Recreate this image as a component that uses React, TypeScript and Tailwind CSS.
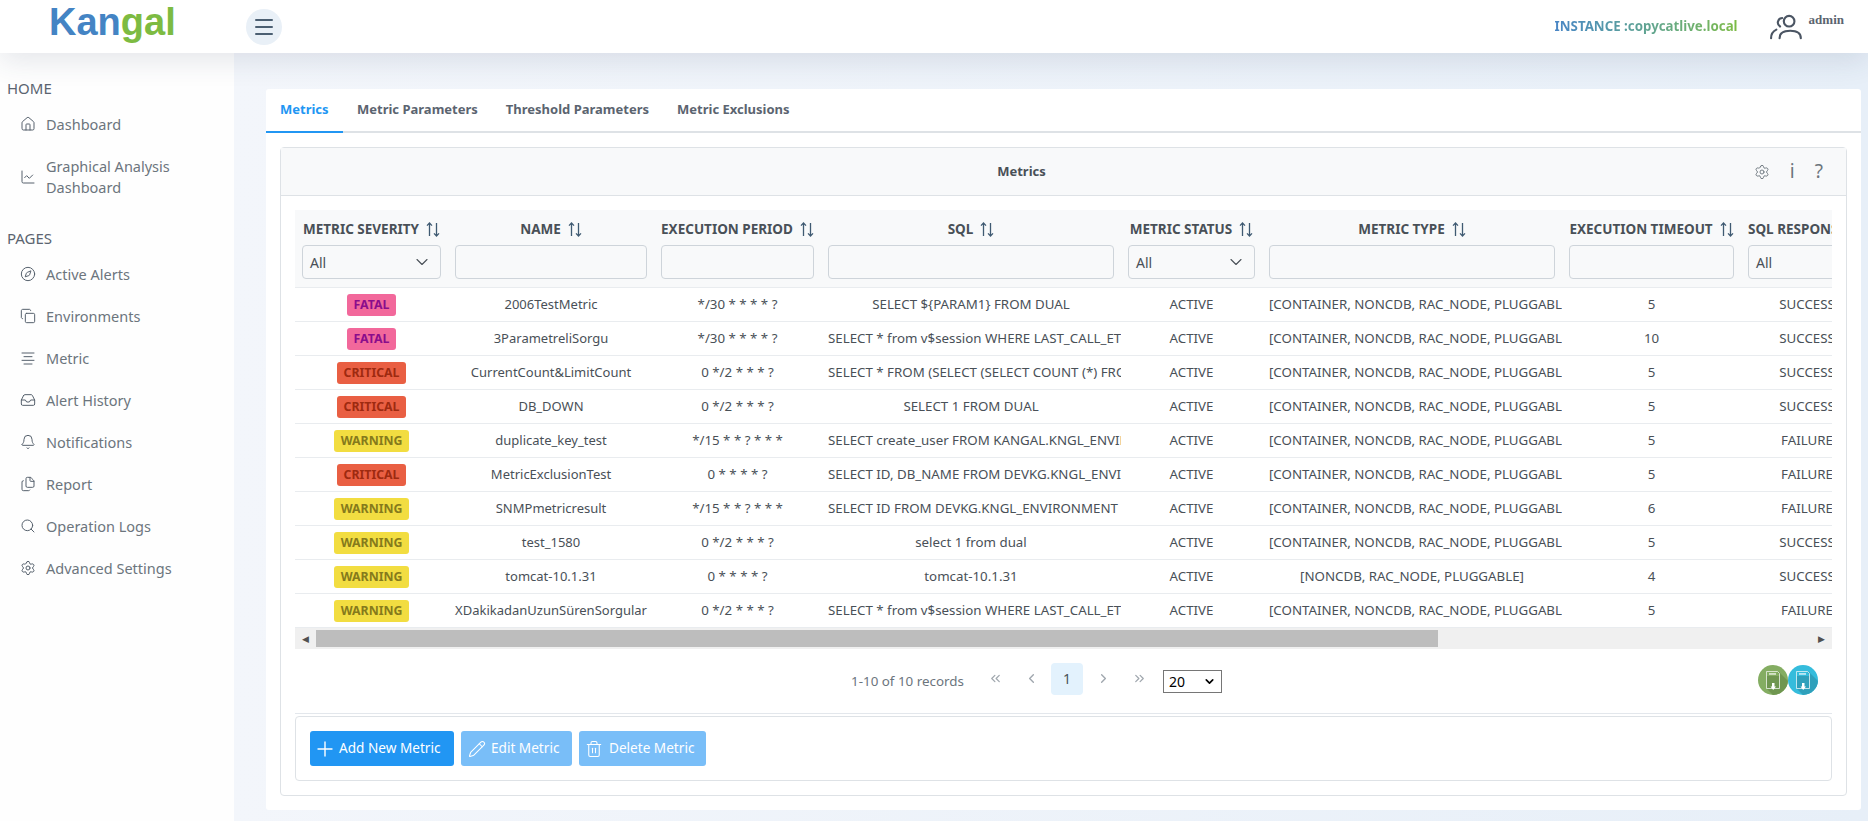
import {
  Bell,
  ChartLine,
  ChevronDown,
  ChevronLeft,
  ChevronRight,
  ChevronsLeft,
  ChevronsRight,
  Compass,
  Copy,
  Files,
  Home,
  Inbox,
  Menu,
  Pencil,
  Plus,
  Search,
  Settings,
  Trash2,
} from "lucide-react";
import React from "react";

type Severity = "FATAL" | "CRITICAL" | "WARNING";

const ALL_TYPES = "[CONTAINER, NONCDB, RAC_NODE, PLUGGABLE]";

const rows: {
  severity: Severity;
  name: string;
  period: string;
  sql: string;
  type: string;
  timeout: number;
  result: string;
}[] = [
  { severity: "FATAL", name: "2006TestMetric", period: "*/30 * * * * ?", sql: "SELECT ${PARAM1} FROM DUAL", type: ALL_TYPES, timeout: 5, result: "SUCCESS" },
  { severity: "FATAL", name: "3ParametreliSorgu", period: "*/30 * * * * ?", sql: "SELECT * from v$session WHERE LAST_CALL_ET > 100", type: ALL_TYPES, timeout: 10, result: "SUCCESS" },
  { severity: "CRITICAL", name: "CurrentCount&LimitCount", period: "0 */2 * * * ?", sql: "SELECT * FROM (SELECT (SELECT COUNT (*) FROM V$SESSION)", type: ALL_TYPES, timeout: 5, result: "SUCCESS" },
  { severity: "CRITICAL", name: "DB_DOWN", period: "0 */2 * * * ?", sql: "SELECT 1 FROM DUAL", type: ALL_TYPES, timeout: 5, result: "SUCCESS" },
  { severity: "WARNING", name: "duplicate_key_test", period: "*/15 * * ? * * *", sql: "SELECT create_user FROM KANGAL.KNGL_ENVIRONMENT", type: ALL_TYPES, timeout: 5, result: "FAILURE" },
  { severity: "CRITICAL", name: "MetricExclusionTest", period: "0 * * * * ?", sql: "SELECT ID, DB_NAME FROM DEVKG.KNGL_ENVIRONMENT", type: ALL_TYPES, timeout: 5, result: "FAILURE" },
  { severity: "WARNING", name: "SNMPmetricresult", period: "*/15 * * ? * * *", sql: "SELECT ID FROM DEVKG.KNGL_ENVIRONMENT", type: ALL_TYPES, timeout: 6, result: "FAILURE" },
  { severity: "WARNING", name: "test_1580", period: "0 */2 * * * ?", sql: "select 1 from dual", type: ALL_TYPES, timeout: 5, result: "SUCCESS" },
  { severity: "WARNING", name: "tomcat-10.1.31", period: "0 * * * * ?", sql: "tomcat-10.1.31", type: "[NONCDB, RAC_NODE, PLUGGABLE]", timeout: 4, result: "SUCCESS" },
  { severity: "WARNING", name: "XDakikadanUzunSürenSorgular", period: "0 */2 * * * ?", sql: "SELECT * from v$session WHERE LAST_CALL_ET > 100", type: ALL_TYPES, timeout: 5, result: "FAILURE" },
];

const severityClass: Record<Severity, string> = {
  FATAL: "bg-[#f2689b] text-[#8a0d8c]",
  CRITICAL: "bg-[#e95f43] text-[#9e2a10]",
  WARNING: "bg-[#f2dd41] text-[#857a1c]",
};

const columns: { title: string; filter: "select" | "input"; width: string; align: string }[] = [
  { title: "METRIC SEVERITY", filter: "select", width: "w-[153px]", align: "justify-center" },
  { title: "NAME", filter: "input", width: "w-[206px]", align: "justify-center" },
  { title: "EXECUTION PERIOD", filter: "input", width: "w-[167px]", align: "justify-center" },
  { title: "SQL", filter: "input", width: "w-[300px]", align: "justify-center" },
  { title: "METRIC STATUS", filter: "select", width: "w-[141px]", align: "justify-center" },
  { title: "METRIC TYPE", filter: "input", width: "w-[300px]", align: "justify-center" },
  { title: "EXECUTION TIMEOUT", filter: "input", width: "w-[179px]", align: "justify-center" },
  { title: "SQL RESPONSE", filter: "select", width: "w-[132px]", align: "justify-start" },
];

function SortIcon() {
  return (
    <svg width="14" height="15" viewBox="0 0 14 15" fill="none" stroke="#3f5a72" strokeWidth="1.3" className="shrink-0">
      <path d="M3.500 14V1M1 3.600 3.500 1 6 3.600" />
      <path d="M10.500 1v13M8 11.400l2.500 2.600 2.500-2.600" />
    </svg>
  );
}

function AlignLines({ size, strokeWidth, className }: { size?: number; strokeWidth?: number; className?: string }) {
  return (
    <svg width={size} height={size} viewBox="0 0 24 24" fill="none" stroke="currentColor" strokeWidth={strokeWidth} strokeLinecap="round" className={className}>
      <path d="M3 4.500h18M6 10h12M3 15.500h18M6 21h12" />
    </svg>
  );
}

function NavItem({ icon: Icon, children }: { icon: React.ComponentType<any>; children: React.ReactNode }) {
  return (
    <div className="flex items-center gap-[10px] pl-[20px] py-[10.5px] text-[14.500px] leading-[21px] text-[#6c757d]">
      <Icon size={16} strokeWidth={1.5} className="shrink-0 text-[#56616d]" />
      <span className="w-[160px]">{children}</span>
    </div>
  );
}

function ExportIcon({ color, shade, id }: { color: string; shade: string; id: string }) {
  return (
    <svg width="30" height="30" viewBox="0 0 30 30">
      <defs>
        <clipPath id={id}>
          <circle cx="15" cy="15" r="15" />
        </clipPath>
      </defs>
      <circle cx="15" cy="15" r="15" fill={color} />
      <path d="M9 24 21 7l12 12v12H16z" fill={shade} clipPath={`url(#${id})`} />
      <path d="M8.500 6.500h11l2 2v15h-13z" fill={shade} stroke="#fff" strokeOpacity="0.7" />
      <path d="M9 7h10.300l1.700 1.700V11H9z" fill={color} />
      <rect x="11" y="8.200" width="7" height="1.500" fill="#fff" fillOpacity="0.8" />
      <path d="M14 18h2.500v3.500h1.500L15.200 25l-2.700-3.500H14z" fill="#fff" />
    </svg>
  );
}

const cell = "overflow-hidden whitespace-nowrap px-[7px] pt-[1px] text-center";

export default function App() {
  return (
    <div className="flex h-screen flex-col overflow-hidden font-['Noto_Sans',sans-serif]">
      <header className="relative z-10 flex h-[53px] shrink-0 items-center bg-white shadow-[0_8px_28px_rgba(40,60,90,0.12)]">
        <div className="w-[246px] pl-[49px] pb-[9px] font-['Liberation_Sans',sans-serif] text-[38px] font-bold leading-[44px] text-[#4484c4]">
          Kan<span className="text-[#7dbb42]">gal</span>
        </div>
        <button className="flex size-9 items-center justify-center rounded-full bg-[#e9f0f7] text-[#4b5f72]">
          <Menu size={24} strokeWidth={2} />
        </button>
        <div className="ml-auto flex items-center pr-[24px]">
          <span className="bg-linear-to-r from-[#4a86c5] to-[#7dbb42] bg-clip-text text-[13.300px] font-bold text-transparent">
            INSTANCE :copycatlive.local
          </span>
          <svg width="34" height="26" viewBox="0 0 32 24" fill="none" stroke="#4b5563" strokeWidth="2" strokeLinecap="round" className="ml-[32px]">
            <circle cx="18" cy="6.500" r="5" />
            <path d="M11.500 3.500A4.300 4.300 0 0 0 9.500 11.500" />
            <path d="M9 22.500C9 17.500 13 15.500 19 15.500s10 2 10 7" />
            <path d="M1 22.500c0-4 2-6.500 5-8" />
          </svg>
          <span className="mb-[13px] ml-[5px] font-['Liberation_Serif',serif] text-[13px] font-bold text-[#5b6470]">admin</span>
        </div>
      </header>

      <div className="flex min-h-0 flex-1">
        <aside className="w-[234px] shrink-0 bg-[#fefefe] pt-[20px]">
          <div className="pl-[7px] text-[15px] leading-[30px] text-[#5b6470]">HOME</div>
          <NavItem icon={Home}>Dashboard</NavItem>
          <NavItem icon={ChartLine}>Graphical Analysis Dashboard</NavItem>
          <div className="mt-[15px] pl-[7px] text-[15px] leading-[30px] text-[#5b6470]">PAGES</div>
          <NavItem icon={Compass}>Active Alerts</NavItem>
          <NavItem icon={Copy}>Environments</NavItem>
          <NavItem icon={AlignLines}>Metric</NavItem>
          <NavItem icon={Inbox}>Alert History</NavItem>
          <NavItem icon={Bell}>Notifications</NavItem>
          <NavItem icon={Files}>Report</NavItem>
          <NavItem icon={Search}>Operation Logs</NavItem>
          <NavItem icon={Settings}>Advanced Settings</NavItem>
        </aside>

        <main className="min-w-0 flex-1 bg-linear-to-r from-[#f3f6fb] to-[#e7eff8] pb-[11px] pl-[32px] pr-[7px] pt-[36px]">
          <div className="flex h-full flex-col rounded-[3px] bg-white">
            <nav className="flex h-[44px] shrink-0 border-b-2 border-[#dee2e6] text-[13px] font-bold text-[#5b6470]">
              <span className="-mb-[2px] flex w-[77px] items-center border-b-2 border-[#2196f3] pl-[14px] text-[#2196f3]">Metrics</span>
              <span className="flex items-center px-[14px]">Metric Parameters</span>
              <span className="flex items-center px-[14px]">Threshold Parameters</span>
              <span className="flex items-center px-[14px]">Metric Exclusions</span>
            </nav>

            <section className="mx-[14px] mb-[14px] mt-[14px] flex min-h-0 flex-1 flex-col rounded-[4px] border border-[#dee2e6]">
              <div className="relative flex h-[48px] shrink-0 items-center justify-center border-b border-[#dee2e6] bg-[#f8f9fa] pr-[84px] text-[13px] font-bold text-[#495057]">
                Metrics
                <div className="absolute right-[23px] top-0 flex h-full items-center gap-[20px] font-normal text-[#6c757d]">
                  <Settings size={16} strokeWidth={1.4} />
                  <span className="text-[19px] leading-none">i</span>
                  <span className="text-[19px] leading-none">?</span>
                </div>
              </div>

              <div className="flex min-h-0 flex-1 flex-col px-[14px] pt-[14px]">
                <div className="overflow-hidden">
                  <table className="w-[1578px] table-fixed border-collapse text-[13.300px] text-[#495057]">
                    <colgroup>
                      {columns.map((c) => (
                        <col key={c.title} className={c.width} />
                      ))}
                    </colgroup>
                    <thead className="bg-[#f8f9fa]">
                      <tr className="border-b border-[#e9ecef]">
                        {columns.map((c) => (
                          <th key={c.title} className="overflow-hidden px-[7px] pb-[8px] pt-[9px] font-bold">
                            <div className={`flex h-[20px] items-center gap-[7px] whitespace-nowrap text-[13.500px] ${c.align}`}>
                              {c.title}
                              <SortIcon />
                            </div>
                            {c.filter === "select" ? (
                              <div className="mt-[6px] flex h-[34px] items-center justify-between rounded-[4px] border border-[#ced4da] bg-[#f8f9fa] pl-[7px] pr-[8px] text-[14px] font-normal">
                                All
                                <ChevronDown size={20} strokeWidth={1.3} className="text-[#495057]" />
                              </div>
                            ) : (
                              <input className="mt-[6px] block h-[34px] w-full rounded-[4px] border border-[#ced4da] bg-[#f8f9fa]" />
                            )}
                          </th>
                        ))}
                      </tr>
                    </thead>
                    <tbody>
                      {rows.map((r) => (
                        <tr key={r.name} className="h-[34px] border-b border-[#e9ecef]">
                          <td className="p-0 pt-[1px]">
                            <span className={`mx-auto block w-fit rounded-[3px] px-[7px] text-[12.300px] font-bold leading-[22px] ${severityClass[r.severity]}`}>
                              {r.severity}
                            </span>
                          </td>
                          <td className={`${cell} text-[13px]`}>{r.name}</td>
                          <td className={cell}>{r.period}</td>
                          <td className={cell}>{r.sql}</td>
                          <td className={cell}>ACTIVE</td>
                          <td className={cell}>{r.type}</td>
                          <td className={cell}>{r.timeout}</td>
                          <td className={cell}>{r.result}</td>
                        </tr>
                      ))}
                    </tbody>
                  </table>
                </div>

                <div className="flex h-[21px] shrink-0 items-center bg-[#f0f0f0] text-[#505050]">
                  <span className="flex w-[21px] justify-center text-[9px]">◀</span>
                  <div className="h-[17px] w-[1122px] bg-[#bdbdbd]" />
                  <span className="ml-auto flex w-[21px] justify-center text-[9px]">▶</span>
                </div>

                <div className="flex h-[65px] shrink-0 items-center border-b border-[#e3e7ec] pl-[556px] pr-[14px] text-[#6c757d]">
                  <span className="w-[113px] whitespace-nowrap text-[13.400px]">1-10 of 10 records</span>
                  <div className="-mt-[5px] ml-[15px] flex items-center gap-[4px] text-[#a0a7ae]">
                    <span className="flex w-[32px] justify-center"><ChevronsLeft size={15} strokeWidth={2} /></span>
                    <span className="flex w-[32px] justify-center"><ChevronLeft size={15} strokeWidth={2.200} /></span>
                    <span className="flex size-[32px] items-center justify-center rounded-[4px] bg-[#e3f2fd] text-[14px] text-[#495057]">1</span>
                    <span className="flex w-[32px] justify-center"><ChevronRight size={15} strokeWidth={2.200} /></span>
                    <span className="flex w-[32px] justify-center"><ChevronsRight size={15} strokeWidth={2} /></span>
                  </div>
                  <div className="ml-[8px] flex h-[23px] w-[59px] items-center justify-between border border-[#767676] px-[5px] text-[14px] text-black">
                    20
                    <ChevronDown size={13} strokeWidth={3} />
                  </div>
                  <div className="-mt-[3px] ml-auto flex">
                    <ExportIcon id="xls" color="#84ad62" shade="#6f9650" />
                    <ExportIcon id="csv" color="#35bcdc" shade="#2fa0bb" />
                  </div>
                </div>

                <div className="mt-[2px] flex h-[65px] shrink-0 items-center gap-[7px] rounded-[4px] border border-[#dee2e6] pl-[14px] text-[13.600px] text-white">
                  <button className="flex h-[35px] w-[144px] items-center gap-[2px] rounded-[3px] bg-[#2196f3] pl-[3px]">
                    <Plus size={24} strokeWidth={1.400} /> Add New Metric
                  </button>
                  <button className="flex h-[35px] w-[111px] items-center gap-[5px] rounded-[3px] bg-[#79bef8] pl-[7px]">
                    <Pencil size={18} strokeWidth={1.400} /> Edit Metric
                  </button>
                  <button className="flex h-[35px] w-[127px] items-center gap-[6px] rounded-[3px] bg-[#79bef8] pl-[6px]">
                    <Trash2 size={18} strokeWidth={1.400} /> Delete Metric
                  </button>
                </div>
              </div>
            </section>
          </div>
        </main>
      </div>
    </div>
  );
}
